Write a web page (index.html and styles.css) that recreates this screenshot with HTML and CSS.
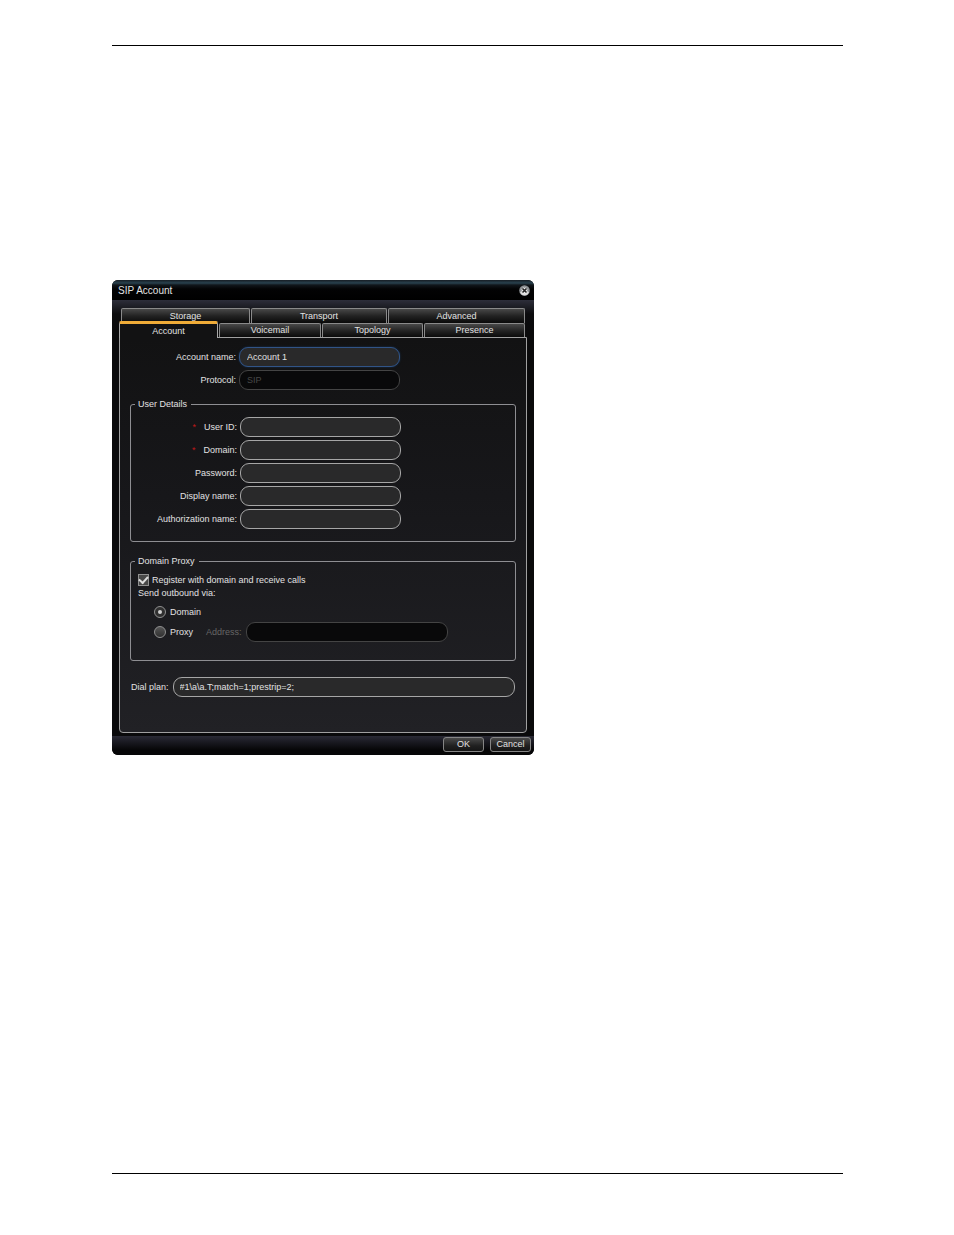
FILE: index.html
```html
<!DOCTYPE html>
<html lang="en">
<head>
<meta charset="utf-8">
<title>SIP Account</title>
<link rel="stylesheet" href="styles.css">
</head>
<body>
<main class="page">
  <hr class="rule">
  <form class="dialog">
    <header class="titlebar">
      <h1 class="title">SIP Account</h1>
      <button class="close" type="button" aria-label="Close">
        <svg width="11" height="11" viewBox="0 0 11 11" aria-hidden="true">
          <circle cx="5.5" cy="5.5" r="5.3" fill="#8d9194"/>
          <path d="M1 7Q5.500 5.500 10 7Q8.500 10.500 5.500 10.500Q2.500 10.500 1 7Z" fill="#dedede"/>
          <path d="M3.500 3.500L7.500 7.500M7.500 3.500L3.500 7.500" stroke="#eee" stroke-width="3.400"/>
          <path d="M3.500 3.500L7.500 7.500M7.500 3.500L3.500 7.500" stroke="#222" stroke-width="1.600"/>
        </svg>
      </button>
    </header>
    <div class="body">
      <nav class="tabs">
        <div class="tab-row tab-row-back">
          <button class="tab" type="button">Storage</button>
          <button class="tab" type="button">Transport</button>
          <button class="tab" type="button">Advanced</button>
        </div>
        <div class="tab-row tab-row-front">
          <button class="tab tab-active" type="button">Account</button>
          <button class="tab" type="button">Voicemail</button>
          <button class="tab" type="button">Topology</button>
          <button class="tab" type="button">Presence</button>
        </div>
      </nav>
      <section class="panel">
        <div class="fields fields-top">
          <label for="name">Account name:</label>
          <input class="field field-focus" id="name" type="text" value="Account 1">
          <label for="protocol">Protocol:</label>
          <input class="field field-off" id="protocol" type="text" value="SIP" disabled>
        </div>
        <fieldset class="group">
          <legend>User Details</legend>
          <div class="fields fields-user">
            <label for="user"><span class="required">*</span>User ID:</label>
            <input class="field" id="user" type="text">
            <label for="domain"><span class="required">*</span>Domain:</label>
            <input class="field" id="domain" type="text">
            <label for="password">Password:</label>
            <input class="field" id="password" type="password">
            <label for="display">Display name:</label>
            <input class="field" id="display" type="text">
            <label for="auth">Authorization name:</label>
            <input class="field" id="auth" type="text">
          </div>
        </fieldset>
        <fieldset class="group group-proxy">
          <legend>Domain Proxy</legend>
          <label class="choice"><input class="check" type="checkbox" checked>Register with domain and receive calls</label>
          <p class="via">Send outbound via:</p>
          <div class="routes">
            <label class="choice"><input class="radio" type="radio" name="route" checked>Domain</label>
            <div class="proxy-row">
              <label class="choice"><input class="radio" type="radio" name="route">Proxy</label>
              <label class="muted" for="address">Address:</label>
              <input class="field field-off address" id="address" type="text" disabled>
            </div>
          </div>
        </fieldset>
        <div class="dial">
          <label for="plan">Dial plan:</label>
          <input class="field plan" id="plan" type="text" value="#1\a\a.T;match=1;prestrip=2;">
        </div>
      </section>
    </div>
    <footer class="actions">
      <button class="action" type="button">OK</button>
      <button class="action" type="button">Cancel</button>
    </footer>
  </form>
  <hr class="rule rule-bottom">
</main>
</body>
</html>
```

FILE: styles.css
```css
* { box-sizing: border-box; }

body {
  margin: 0;
  background: #fff;
  font: 9px/12px "Liberation Sans", Arial, sans-serif;
  color: #e2e2e2;
}

button, input { font: inherit; color: inherit; margin: 0; }

.page {
  display: flex;
  flex-direction: column;
  min-height: 100vh;
  padding: 45px 111px 61px 112px;
}

.rule { width: 100%; margin: 0; border: 0; border-top: 1px solid #000; }
.rule-bottom { margin-top: auto; }

.dialog {
  width: 100%;
  max-width: 422px;
  margin-top: 234px;
  border-radius: 6px;
  overflow: hidden;
  background: #0a0a0b;
}

.titlebar {
  display: flex;
  align-items: center;
  justify-content: space-between;
  height: 20px;
  padding: 1px 4px 0 6px;
  background: linear-gradient(#161d24, #29424f 3px, #11161b 5px, #030304 9px, #000);
}

.title { margin: 0; font-size: 10px; font-weight: normal; }
.close { display: flex; padding: 0; border: 0; background: none; }

.body {
  padding: 8px 7px 3px;
  background: linear-gradient(#2d2e3a, #0c0c0e 14px, #0a0a0b 30px);
}

.tab-row { display: grid; gap: 1px; }
.tab-row-back { grid-template: 15px / 129fr 136fr 137fr; padding: 0 2px; }
.tab-row-front { grid-template: 14px / 99fr 102fr 101fr 101fr; padding-right: 2px; }

.tab {
  padding: 0;
  border: 1px solid #8a8a8a;
  border-bottom: 0;
  border-radius: 2px 2px 0 0;
  background: linear-gradient(#484848, #222 7px, #0a0a0a);
  line-height: 13px;
}

.tab-active {
  position: relative;
  margin: -2px 0 -1px;
  border-color: #a8a8a8;
  border-top: 3px solid #f0ac38;
  background: #121213;
}

.panel {
  padding: 9px 10px 35px;
  border: 1px solid #a0a0a0;
  border-radius: 0 0 4px 4px;
  background: linear-gradient(#121213, #17171a 40%, #212125);
}

.fields {
  display: grid;
  align-items: center;
  column-gap: 3px;
  row-gap: 3px;
  text-align: right;
}
.fields-top { grid-template-columns: 106px 161px; }
.fields-user { grid-template-columns: 99px 161px; }

.required { margin-right: 8px; color: #c01818; }

.field {
  width: 100%;
  height: 20px;
  padding: 0 7px;
  border: 1px solid #a6a6a6;
  border-radius: 9px;
  background: #29292a;
}
.plan { padding: 0 6px; }
.field-focus { border-color: #315487; box-shadow: 0 0 2px #18375f; }
.field-off { border-color: #444; background: #09090a; color: #484848; }

.group {
  min-width: 0;
  margin: 8px 0 0;
  padding: 7px 7px 12px;
  border: 1px solid #8e8e92;
  border-radius: 3px;
}
.group legend { margin-left: -3px; padding: 0 4px 0 3px; }
.group-proxy { margin-top: 13px; padding: 7px 7px 18px; }

.choice { display: flex; align-items: center; gap: 3px; }
.via { margin: 1px 0 0; }

.check, .radio {
  appearance: none;
  flex: none;
  display: grid;
  place-items: center;
  width: 12px;
  height: 12px;
  border: 1px solid #909090;
}
.check { width: 11px; background: #484848; }
.check::after {
  content: "";
  width: 7px;
  height: 4px;
  border: solid #ddd;
  border-width: 0 0 2px 2px;
  transform: translateY(-1px) rotate(-48deg);
}
.radio { border-radius: 50%; background: linear-gradient(#555, #303030); }
.radio:checked { background: #303030; }
.radio:checked::after {
  content: "";
  width: 4px;
  height: 4px;
  border-radius: 50%;
  background: #d0d0d0;
}

.routes { display: grid; gap: 4px; padding: 7px 0 0 16px; }
.routes .choice { gap: 4px; }
.proxy-row { display: flex; align-items: center; }
.muted { margin: 0 4px 0 13px; color: #666; }
.address { width: 202px; }

.dial { display: flex; align-items: center; gap: 4px; margin: 16px 1px 0; }
.dial label { flex: none; }

.actions {
  display: flex;
  justify-content: flex-end;
  gap: 6px;
  height: 19px;
  padding: 1px 3px 3px;
  background: linear-gradient(#2a2a35, #17171e 7px, #060607 14px);
}
.action {
  width: 41px;
  padding: 0;
  border: 1px solid #858585;
  border-radius: 3px;
  background: linear-gradient(#4a4a4a, #202020 60%, #151515);
  line-height: 13px;
}
```
